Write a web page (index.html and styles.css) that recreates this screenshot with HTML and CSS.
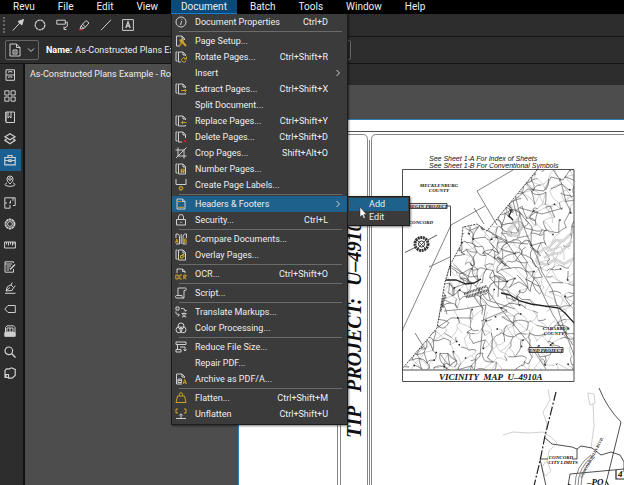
FILE: index.html
```html
<!DOCTYPE html>
<html lang="en">
<head>
    <meta charset="UTF-8">
    <meta name="viewport" content="width=device-width, initial-scale=1.0">
    <title>Revu</title>
    <link rel="stylesheet" href="styles.css">
</head>
<body>
    <nav class="menubar">
        <button>Revu</button>
        <button>File</button>
        <button>Edit</button>
        <button>View</button>
        <div class="menu-wrap">
            <button class="open">Document</button>
            <ul class="menu">
                <li><button><svg viewBox="0 0 12 12"><circle cx="6" cy="6" r="5"/><path d="M6.6 5 5.5 9M6.9 2.8v.9"/></svg><span>Document Properties</span><kbd>Ctrl+D</kbd></button></li>
                <li class="sep"></li>
                <li><button><svg viewBox="0 0 12 12"><path d="M5 11H1.500V1H7l2.500 2.500V5M7 1v3h2.500"/><path class="gold wide" d="m7 6.500 4 4.500M5.500 5.500l2-.5.5 2-1.500.5zM5 10l1-1"/></svg><span>Page Setup...</span></button></li>
                <li><button><svg viewBox="0 0 12 12"><path d="M2.500 1H1v9h1.500M6 11H3.500V1H8l2.500 2.500V5M8 1v3h2.500"/><path class="gold" d="M10.500 7.500A2.200 2.200 0 1 0 11 9.500M11.500 5.500v2.500H9"/></svg><span>Rotate Pages...</span><kbd>Ctrl+Shift+R</kbd></button></li>
                <li><button><i></i><span>Insert</span><svg class="arrow" viewBox="0 0 6 8"><path d="m1.500 1 3 3-3 3"/></svg></button></li>
                <li><button><svg viewBox="0 0 12 12"><path d="M2.500 1H1v9h1.500M10.500 10v1h-7V1H8l2.500 2.500V5M8 1v3h2.500"/><path class="gold" d="M6 7.500h5M9.500 5.800l1.700 1.700-1.700 1.700"/></svg><span>Extract Pages...</span><kbd>Ctrl+Shift+X</kbd></button></li>
                <li><button><i></i><span>Split Document...</span></button></li>
                <li><button><svg viewBox="0 0 12 12"><path d="M2.500 1H1v9h1.500M10.500 10v1h-7V1H8l2.500 2.500V5M8 1v3h2.500"/><path class="gold" d="M11.500 7.500h-5M8 5.800 6.300 7.500 8 9.200"/></svg><span>Replace Pages...</span><kbd>Ctrl+Shift+Y</kbd></button></li>
                <li><button><svg viewBox="0 0 12 12"><path d="M2.500 1H1v9h1.500M7 11H3.500V1H8l2.500 2.500V7M8 1v3h2.500"/><path class="red" d="m8.500 8.500 3 3m0-3-3 3"/></svg><span>Delete Pages...</span><kbd>Ctrl+Shift+D</kbd></button></li>
                <li><button><svg viewBox="0 0 12 12"><path d="M3 .5v8.500h8.500M.5 3H9v8.500M1 11 11.500.5"/></svg><span>Crop Pages...</span><kbd>Shift+Alt+O</kbd></button></li>
                <li><button><svg viewBox="0 0 12 12"><path d="M2.500 1H1v9h1.500M10.500 5v6h-7V1H8l2.500 2.500V5M8 1v3h2.500"/><path class="gold" d="m6.800 5.500-.6 4.500m2.800-4.500L8.400 10M5.500 7H10M5.300 8.700h4.500"/></svg><span>Number Pages...</span></button></li>
                <li><button><svg viewBox="0 0 12 12"><path d="M1 0v5.500h10V0"/><circle class="gold" cx="6" cy="9.300" r="1.500"/><path class="gold" d="M6 6.800v1M6 11v1M3.500 9.300h1M7.500 9.300h1M4.200 7.500l.8.800M7 10.300l.8.800M7.800 7.500l-.8.800M5 10.300l-.8.800"/></svg><span>Create Page Labels...</span></button></li>
                <li class="sep"></li>
                <li class="current">
                    <button><svg viewBox="0 0 12 12"><path d="M2 1h5.500L10 3.500V11H2zM7.500 1v2.500H10"/><path class="gold" d="M3 3.500h3.500M3 9.300h6"/></svg><span>Headers &amp; Footers</span><svg class="arrow" viewBox="0 0 6 8"><path d="m1.500 1 3 3-3 3"/></svg></button>
                    <ul class="submenu">
                        <li><button class="hover">Add</button></li>
                        <li><button>Edit</button></li>
                        <li class="pointer"><svg viewBox="0 0 8 12"><path d="M1 0v10l2.200-2 1.500 3.500 1.600-.7L4.800 7.500h2.700z"/></svg></li>
                    </ul>
                </li>
                <li><button><svg viewBox="0 0 12 12"><path d="M1.500 5.500h9V11h-9zM3.500 5.500V3a2.500 2.500 0 0 1 5 0v2.500M6 7.500v1.500"/></svg><span>Security...</span><kbd>Ctrl+L</kbd></button></li>
                <li class="sep"></li>
                <li><button><svg viewBox="0 0 12 12"><path d="M1 5V1h2l1.500 2v8M11.500 5V1h-2L8 3v8M6.200 1v10M1 11h3.500M8 11h3.500"/><path class="gold" d="m.5 10 1.300-4 1.300 4M1 8.700h1.700M9.300 6v3.800h1.500c1 0 1-1.900 0-1.900H9.300M10.600 7.900c1 0 1-1.900 0-1.900H9.300"/></svg><span>Compare Documents...</span></button></li>
                <li><button><svg viewBox="0 0 12 12"><path d="M2.500 1H1v9h1.500M10.500 5v6h-7V1H8l2.500 2.500V5M8 1v3h2.500"/><path class="gold" d="M5.500 6.500h2.500V9H5.500zM7 5.500h2v2.500"/></svg><span>Overlay Pages...</span></button></li>
                <li class="sep"></li>
                <li><button><svg viewBox="0 0 12 12"><path d="M2 5V1h5.500L10 3.500V5M7.500 1v2.500H10"/><path class="gold" d="M.8 7h2.400v4H.8zM7 7H4.800v4H7M8.800 11.300V7H11v2H8.800l2.500 2.300"/></svg><span>OCR...</span><kbd>Ctrl+Shift+O</kbd></button></li>
                <li class="sep"></li>
                <li><button><svg viewBox="0 0 12 12"><path d="M3 8V1h7.500c1 0 1 2.500 0 2.500H9V11H1.500c-1.300 0-1.300-2.500 0-2.500H7c0 1.200.5 2.500 2 2.500"/></svg><span>Script...</span></button></li>
                <li class="sep"></li>
                <li><button><svg viewBox="0 0 12 12"><path d="M1 1h3v3H1zM.8 5.500C.8 8 2 9 4 9M3 7.500 4.300 9 3 10.500M6 2.500c3 0 4 .5 4.500 2.500M9.200 4l1.300 1.300L11.600 4M6.500 7.500h5M9 6.500v1M7 11c2 0 3.500-2 3.500-3.500M7.500 7.800c.5 2 2 3 3.800 3.200"/></svg><span>Translate Markups...</span></button></li>
                <li><button><svg viewBox="0 0 12 12"><circle cx="6" cy="4" r="3"/><circle cx="4" cy="7.800" r="3"/><circle cx="8" cy="7.800" r="3"/></svg><span>Color Processing...</span></button></li>
                <li class="sep"></li>
                <li><button><svg viewBox="0 0 12 12"><path d="M1 1h10v2.500H1zM2.500 3.500v5M1 8.500h5V11H1zM5 6h5v3.500M8.500 8.500 10 10l1.500-1.500"/></svg><span>Reduce File Size...</span></button></li>
                <li><button><i></i><span>Repair PDF...</span></button></li>
                <li><button><svg viewBox="0 0 12 12"><path d="M7 11H1.500V1H7l2.500 2.500V5M7 1v3h2.500M3 6h3.500v3.500H3zM3.500 7.500h2.500"/><path class="gold" d="m8 11 1.700-4.500L11.500 11M8.500 9.700h2.500"/></svg><span>Archive as PDF/A...</span></button></li>
                <li class="sep"></li>
                <li><button><svg viewBox="0 0 12 12"><path class="gold" d="M2.500 4h7l1.500 6.500H1zM4.300 4V2.500a1.700 1.700 0 0 1 3.400 0V4"/></svg><span>Flatten...</span><kbd>Ctrl+Shift+M</kbd></button></li>
                <li><button><svg viewBox="0 0 12 12"><path class="gold" d="M3 1H1v4M9 1h2v4M1 5h2M9 5h2"/><path d="M6 10V6M4.300 7.500 6 5.800l1.700 1.700M1 10.500h10"/></svg><span>Unflatten</span><kbd>Ctrl+Shift+U</kbd></button></li>
            </ul>
        </div>
        <button>Batch</button>
        <button>Tools</button>
        <button>Window</button>
        <button>Help</button>
    </nav>

    <div class="toolbar">
        <span class="grip"></span>
        <button aria-label="Arrow"><svg viewBox="0 0 12 12"><path d="m.8 11.500 7-7.500"/><path class="solid" d="M11.500.5 9.800 6 6 2.500z"/></svg></button>
        <button aria-label="Cloud"><svg viewBox="0 0 12 12"><circle cx="6" cy="6" r="4.800" stroke-dasharray="2.700 .5" stroke-width="1.300"/></svg></button>
        <button aria-label="Callout"><svg viewBox="0 0 12 12"><path d="M.8 1.200h8.500v4H.8zM9.300 3.200h2v4L8 9.500M8 7.500v3h2.500"/></svg></button>
        <button aria-label="Highlight"><svg viewBox="0 0 12 12"><path d="m3 7 5-5.500 3 2.500-5 5.500zM3 7 2 10l4-.5M4.500 5.300l3 2.700"/><path class="red" d="M.5 11H5"/></svg></button>
        <button aria-label="Line"><svg viewBox="0 0 12 12"><path d="M1 11.200 11 .8"/></svg></button>
        <button aria-label="Text box"><svg viewBox="0 0 12 12"><path d="M.6.6h10.800v10.800H.6z"/><path stroke-width="1.300" d="m3.800 9 2.200-6 2.200 6M4.500 7.200h3"/></svg></button>
    </div>

    <div class="properties">
        <button class="profile" aria-label="Page type"><svg viewBox="0 0 12 14"><path d="M1 1h6.500L11 4.500V13H1zM7.500 1v3.500H11M4 7h4v4H4zM5 9h2"/></svg><svg class="down" viewBox="0 0 8 6"><path d="m1 1.500 3 3 3-3"/></svg></button>
        <label for="name">Name:</label>
        <input id="name" type="text" value="As-Constructed Plans Example - Rowan">
        <button class="browse" aria-label="Browse"></button>
    </div>

    <div class="main">
        <aside class="sidebar">
            <div class="panels">
                <button aria-label="File access"><svg viewBox="0 0 12 12"><path d="M2 .8h8.500v10.500H2zM2 6h8.500M4.500 3.500v-.8h3.500v.8M4.500 8.700v-.8h3.500v.8"/></svg></button>
                <button aria-label="Thumbnails"><svg viewBox="0 0 12 12"><path d="M.8.8H5V5H.8zM7 .8h4.200V5H7zM.8 7H5v4.200H.8zM7 7h4.200v4.200H7z"/></svg></button>
                <button aria-label="Bookmarks"><svg viewBox="0 0 12 12"><path d="M2 1h8.500v10.500H2zM4 1v6l1.500-1.500L7 7V1M1.800 1v9.500"/></svg></button>
                <button aria-label="Layers"><svg viewBox="0 0 12 12"><path stroke-width="1.300" d="m6 .8 5 3-5 3-5-3zM2.500 6 1 7.300l5 3.500 5-3.500L9.500 6"/></svg></button>
                <button class="active" aria-label="Tool chest"><svg viewBox="0 0 12 12"><path stroke-width="1.200" d="M.8 3.500h10.400v7.300H.8zM4 3.500V1.500h4v2M.8 6.500h4M7.200 6.500h4M4.800 5.800h2.400v1.700H4.800z"/></svg></button>
                <button aria-label="Places"><svg viewBox="0 0 12 12"><path d="M6 9C3.500 6.500 3 5.300 3 4a3 3 0 0 1 6 0c0 1.300-.5 2.500-3 5zM3 8C.5 8.500.5 11 3 10.800c1 .8 5 .8 6 0 2.500.2 2.500-2.300 0-2.800"/><circle cx="6" cy="4" r="1.300"/></svg></button>
                <button aria-label="Spaces"><svg viewBox="0 0 12 12"><path d="M6 .8H.8v10.400H6V8M.8 6H3M5 6h1.500V3.500M6 .8h5.200v7.700H9M9 .8v3"/></svg></button>
                <button aria-label="Properties"><svg viewBox="0 0 12 12"><circle cx="6" cy="6" r="4.500" stroke-width="1.800" stroke-dasharray="2.400 .4"/><circle cx="6" cy="6" r="2.400"/></svg></button>
                <button aria-label="Measurements"><svg viewBox="0 0 12 12"><path d="M.6 3h10.800v6H.6zM2.500 3v2.500M4.500 3v3.500M6.500 3v2.500M8.500 3v3.500M10 3v2.500"/></svg></button>
                <button aria-label="Markups"><svg viewBox="0 0 12 12"><path d="M9.500 2V.8H1v10.400h8.500V8M1 3h7M2.500 5H7M2.500 7h3M2.500 9H5"/><path stroke-width="1.500" d="m6 8.500 5-5"/></svg></button>
                <button aria-label="Signatures"><svg viewBox="0 0 12 12"><path d="M1 11.300h10.500M2 9l1.500-4.500L7 3l2.500 2.500L8 8.500zM7 3l1.200-2.500M9.500 5.500 11.500 4M2 9l4-3.500"/></svg></button>
                <button aria-label="Flags"><svg viewBox="0 0 12 12"><path d="M4 2.500h7.300v7H4L.8 6z"/></svg></button>
                <button aria-label="Sets"><svg viewBox="0 0 12 12"><path class="solid" d="M.8 7.500h10.400v3.800H.8z"/><path d="M1.500 7V2.500L3 .8h6.500L11 2.500V7M3 3h6v4H3zM6 3v4"/></svg></button>
                <button aria-label="Search"><svg viewBox="0 0 12 12"><circle cx="4.800" cy="4.800" r="3.800" stroke-width="1.200"/><path stroke-width="1.400" d="m7.500 7.500 4 4"/></svg></button>
                <button aria-label="Studio"><svg viewBox="0 0 12 12"><path stroke-width="1.200" d="M1 7V3.500l1.500-1.700h3L7.500.8l3.700 1.700v6L8 11.200H4.500V7.500H2v3h2.500M1 7v3.500h1"/></svg></button>
            </div>
        </aside>

        <section class="workspace">
            <div class="tabs"><a class="tab" href="#">As-Constructed Plans Example - Rowan</a></div>
            <div class="canvas">
                <div class="sheet">
                    <svg class="drawing" viewBox="240 120 385 366">
                        <defs>
                            <clipPath id="county"><path d="M538 170 488 231 478 224 464 227 462 245 451 265 446 282 438 328 403 369.500H575V170z"/></clipPath>
                        </defs>
                        <!-- sheet border -->
                        <path class="ink" d="M240 131.500h385"/>
                        <path class="mid" d="M240 134.500h124q4.500 0 4.500 5V486M625 134.500H377q-4.500 0-4.500 5V486M338.500 425v61M341.500 425v61M370.500 140v346"/>
                        <g class="project" transform="translate(362 438) rotate(-90)">
                            <text x="0">TIP</text><text x="46">PROJECT:</text><text x="152">U–4910A</text>
                        </g>
                        <text class="note" x="430" y="161">See Sheet 1-A For Index of Sheets</text>
                        <text class="note" x="430" y="168">See Sheet 1-B For Conventional Symbols</text>

                        <!-- vicinity map -->
                        <g clip-path="url(#county)">
                            <path id="contours" class="contour"/>
                            <path id="roads" class="road"/>
                            <path id="dots" class="ink dots"/>
                            <path class="lake" d="M540 253q5-5 10-6l7-7 7 1 11-10M540 253l-3 9 11 3 8-6 9 5 10-6M548 251l8-2 6-7M510 229l8-8 5 6-4 9-9-1zM545 258l8-4 8-1 12-12"/>
                            <path class="road" d="M515 191l7 28 6 16 11 24 4 13 10 17 12 40 10 26M487 230l23 12 19 2M506 240l20 29 12 13 16 33 20 30M487 305l-3 17-3 34-9 10-14 4M490 293l12 16 27 33 18 27M500 277l-1 20M476 285l12 15 28 9M518 216l-4-15 15-12 16 2 7-14 12 3 7-10M561 178l6 24 6 12M521 208l22 6 21-6M531 247l11 9M451 265l11 7 9 5 8-1M445 311l20-2 22-4M438 328l14-10 21 0M482 321l26-11"/>
                            <path class="heavy" d="M446 280h11l10 4 8-1 7-4M502 293l9 2 10 6 11 3 28 4 6 5 10 11M513 209l-3 7 4 4"/>
                            <path class="heavy hatch" d="M465 294l23-8M467 297l22-7M458 246l3 5M480 222l4 8M509 203l5 10M499 257l8 9M441 303l4 4M446 295l-5 17"/>
                        </g>
                        <path class="ink" stroke-dasharray="2 1" d="M538 170 488 231 478 224 464 227 462 245 451 265 446 282 438 328 403 369"/>
                        <path class="mid" d="M514 170 478 191 498 225M486 206 452 225 403 331M430 267l21-10M416 333l10 16M475 208l10 16"/>
                        <path class="ink" d="M403.500 169.500h171.500v212H403.500zM403.500 370h171.500M448 206h3.500v70"/>
                        <path class="ink box" d="M410 203.500h38v5h-38zM530 347.500h34v5h-34z"/>
                        <g class="compass">
                            <circle cx="422.500" cy="244" r="6.500" stroke-width="3" stroke-dasharray="2 .6"/>
                            <circle cx="422.500" cy="244" r="3"/>
                            <path d="M406 252.500l10-5M429 240l9-5M418 240l9 9M427 240l-9 9"/>
                        </g>
                        <g class="place">
                            <text x="440" y="187">MECKLENBURG</text>
                            <text x="440" y="192">COUNTY</text>
                            <text x="429" y="208">BEGIN PROJECT</text>
                            <text x="422" y="224">CONCORD</text>
                            <text x="557" y="330">CABARRUS</text>
                            <text x="555" y="335">COUNTY</text>
                            <text x="547" y="352">END PROJECT</text>
                            <text x="562" y="459">CONCORD</text>
                            <text x="564" y="464">CITY LIMITS</text>
                            <text transform="translate(594 458) rotate(-62)">CONCORD MILLS BLVD.</text>
                        </g>
                        <text class="caption" x="440" y="380">VICINITY&#160; MAP&#160; U–4910A</text>

                        <!-- plan corner below the map -->
                        <path class="contour" d="M504 435l10-3 16 1 14-1 9 6 5 5-8 8-2 10 4 10-6 5-3-8 3-6 4 0M549 389l2 11-7 12 4 12-2 12M589 393l6 1 1 9-5 2-2-9zM594 404l1 22-3 22"/>
                        <path class="ink wide" stroke-dasharray="9 2 2 2" d="M557 392l-11 44-5 25-6 25"/>
                        <path class="ink" d="M545 437l8 7 20 3 5 2 4-3 11 2 9 7 10-3 9 3 4 7v10M578 449v10h-5M549 459h-8l6 27M600 388q8 20 22 34l-13 53-3 11M571 474l54-5M571 474l-2 12"/>
                        <path class="mid" d="M576 486q0-20 16-31M579 486q0-19 15-30M582 486q0-18 14-29"/>
                        <path class="ink wide" d="M607 481l3 5M569 484l4 2M617 470v9h8"/>
                        <text class="caption" x="619" y="477">4</text>
                        <text class="caption" x="588" y="485">–PO</text>
                    </svg>
                </div>
            </div>
        </section>
    </div>
    <script src="map.js"></script>
</body>
</html>
```
FILE: styles.css
```css
* {
    box-sizing: border-box;
}

body {
    margin: 0;
    height: 100vh;
    display: flex;
    flex-direction: column;
    overflow: hidden;
    background-color: #2d2d2d;
    color: #eee;
    font-family: Roboto, Arial, sans-serif;
    font-size: 9px;
}

button,
input {
    margin: 0;
    padding: 0;
    border: none;
    background: none;
    color: inherit;
    font: inherit;
}

ul {
    list-style: none;
    margin: 0;
    padding: 0;
}

svg {
    display: block;
    flex: none;
    width: 12px;
    height: 12px;
    fill: none;
    stroke: #cfcfcf;
    stroke-width: 1;
}

.gold {
    stroke: #c9a227;
}

.red {
    stroke: #c8202c;
}

.solid {
    fill: #cfcfcf;
}

.wide {
    stroke-width: 2;
}

/* Menu bar */
.menubar {
    display: flex;
    gap: 3px;
    height: 14px;
    padding-left: 3px;
    background-color: #000;
    font-size: 10px;
}

.menubar > button,
.open {
    height: 14px;
    padding: 0 10px;
    line-height: 14px;
}

.menu-wrap {
    position: relative;
}

.open {
    background-color: #0a4a7a;
    border-bottom: 1px solid #1683d8;
}

/* Drop-down menu */
.menu {
    position: absolute;
    z-index: 2;
    top: 14px;
    left: 0;
    width: 177px;
    padding-bottom: 2px;
    background-color: #3b3b3b;
    border: 1px solid #1c1c1c;
    border-top: none;
    box-shadow: 1px 1px 2px rgba(0, 0, 0, 0.5);
    font-size: 9px;
}

.menu > li > button {
    display: flex;
    align-items: center;
    gap: 8px;
    width: 100%;
    height: 16px;
    padding-left: 3px;
    text-align: left;
}

.menu i {
    width: 12px;
}

.menu span {
    flex: 1;
    white-space: nowrap;
}

.menu kbd {
    padding-right: 19px;
    font: inherit;
}

.menu .arrow {
    width: 6px;
    height: 8px;
    margin-right: 6px;
}

.menu .sep {
    height: 1px;
    margin: 1px 5px 1px 7px;
    background-color: #6b6b6b;
}

.current {
    position: relative;
}

.current > button {
    background-color: #1f618d;
}

.submenu {
    position: absolute;
    top: 0;
    left: 100%;
    width: 63px;
    padding: 1px;
    background-color: #3b3b3b;
    border: 1px solid #1c1c1c;
    box-shadow: 1px 1px 2px rgba(0, 0, 0, 0.5);
}

.submenu button {
    width: 100%;
    height: 13px;
    padding-left: 20px;
    text-align: left;
    line-height: 13px;
}

.submenu .hover {
    background-color: #1f618d;
}

.pointer {
    position: absolute;
    top: 10px;
    left: 11px;
}

.pointer svg {
    width: 8px;
    height: 12px;
    fill: #fff;
    stroke: #222;
    stroke-width: 0.5;
}

/* Toolbar */
.toolbar {
    display: flex;
    align-items: center;
    gap: 10px;
    height: 23px;
    padding-left: 3px;
    border-bottom: 1px solid #151515;
}

.grip {
    height: 16px;
    margin-right: -3px;
    border-left: 2px dotted #666;
}

/* Properties bar */
.properties {
    display: flex;
    align-items: center;
    height: 27px;
    padding-left: 5px;
    border-bottom: 1px solid #151515;
}

.profile {
    display: flex;
    align-items: center;
    justify-content: space-between;
    width: 34px;
    height: 20px;
    margin-right: 7px;
    padding: 0 3px;
    border: 1px solid #666;
    border-radius: 2px;
}

.profile svg {
    height: 14px;
}

.profile .down {
    width: 8px;
    height: 6px;
}

.properties label {
    margin-right: 3px;
    color: #fff;
    font-weight: bold;
}

.properties input {
    width: 96px;
}

.browse {
    width: 180px;
    height: 20px;
    border: 1px solid #666;
    border-radius: 2px;
}

.main {
    display: flex;
    flex: 1;
    min-height: 0;
}

/* Side panel buttons */
.sidebar {
    width: 25px;
    border-right: 2px solid #111;
}

.panels {
    display: flex;
    flex-direction: column;
    height: 320px;
}

.panels button {
    display: flex;
    flex: 1;
    align-items: center;
    width: 21px;
    padding-left: 4px;
}

.panels .active {
    background-color: #1b5f92;
}

.workspace {
    display: flex;
    flex: 1;
    flex-direction: column;
    min-width: 0;
    background-color: #4d4d4d;
}

.tabs {
    display: flex;
    height: 21px;
    background-color: #2d2d2d;
}

.tab {
    max-width: 147px;
    padding-left: 5px;
    overflow: hidden;
    background-color: #4d4d4d;
    color: inherit;
    line-height: 21px;
    text-decoration: none;
    white-space: nowrap;
}

.canvas {
    display: flex;
    flex: 1;
    min-height: 0;
    padding: 34px 0 0 213px;
}

.sheet {
    flex: 1;
    overflow: hidden;
    background-color: #fff;
    border-top: 1px solid #2f7db5;
    border-left: 1px solid #2f7db5;
}

/* Plan drawing */
.drawing {
    width: 385px;
    height: 366px;
    stroke: none;
}

.drawing path {
    stroke-width: 0.8;
}

.drawing .ink {
    stroke: #222;
}

.drawing .mid {
    stroke: #666;
}

.drawing .wide {
    stroke-width: 1.2;
}

.drawing .contour {
    stroke: #bbb;
    stroke-width: 0.7;
}

.drawing .road {
    stroke: #444;
    stroke-width: 0.6;
}

.drawing .heavy {
    stroke: #222;
    stroke-width: 1.3;
}

.drawing .hatch {
    stroke: #555;
    stroke-width: 2.5;
    stroke-dasharray: 1 0.6;
}

.drawing .lake {
    stroke: #ccc;
    stroke-width: 3;
    stroke-dasharray: 1 0.4;
}

.drawing .dots {
    stroke-width: 1.5;
}

.drawing .box {
    fill: #ddd;
}

.compass {
    stroke: #333;
}

.drawing text {
    fill: #111;
    font-family: "Liberation Serif", "Times New Roman", serif;
    font-style: italic;
    font-weight: bold;
}

.drawing .project text {
    font-size: 20px;
}

.drawing .note {
    font-family: "Liberation Sans", Arial, sans-serif;
    font-size: 7px;
    font-weight: normal;
}

.drawing .caption {
    font-size: 9px;
}

.drawing .place text {
    font-size: 5px;
    text-anchor: middle;
}

.drawing .place text[transform] {
    font-size: 4px;
}
```
FILE: map.js
```javascript
// Fills the county area of the vicinity map with local roads and contour lines
let seed = 17;

function rnd() {
    seed = (seed * 16807) % 2147483647;
    return seed / 2147483647;
}

function jitter(n) {
    return (rnd() - 0.5) * n;
}

// Road junctions sit on a loose grid
const step = 7;
const nodes = [];
for (let y = 0; y < 31; y++) {
    nodes[y] = [];
    for (let x = 0; x < 27; x++) {
        nodes[y][x] = [400 + x * step + jitter(7), 166 + y * step + jitter(7)];
    }
}

function link(a, b) {
    const mx = (a[0] + b[0]) / 2 + jitter(7);
    const my = (a[1] + b[1]) / 2 + jitter(7);
    return `M${a[0].toFixed(1)} ${a[1].toFixed(1)}Q${mx.toFixed(1)} ${my.toFixed(1)} ${b[0].toFixed(1)} ${b[1].toFixed(1)}`;
}

let roads = '';
let contours = '';
let dots = '';
for (let y = 0; y < 30; y++) {
    for (let x = 0; x < 26; x++) {
        const here = nodes[y][x];
        // the town on the west side is denser than the countryside
        const town = here[1] < 300 && here[0] < 535 || here[0] < 450;
        const density = town ? 0.62 : 0.3;
        if (rnd() < density) roads += link(here, nodes[y][x + 1]);
        if (rnd() < density) roads += link(here, nodes[y + 1][x]);
        if (town && rnd() < 0.2) roads += link(here, nodes[y + 1][x + 1]);
        if (rnd() < 0.4) contours += link(here, nodes[y + 1][x + 1]);
        if (rnd() < 0.3) contours += link(nodes[y][x + 1], nodes[y + 1][x]);
        if (rnd() < 0.12) dots += `M${here[0].toFixed(1)} ${here[1].toFixed(1)}h1.5`;
    }
}

document.getElementById('roads').setAttribute('d', roads);
document.getElementById('contours').setAttribute('d', contours);
document.getElementById('dots').setAttribute('d', dots);
```
